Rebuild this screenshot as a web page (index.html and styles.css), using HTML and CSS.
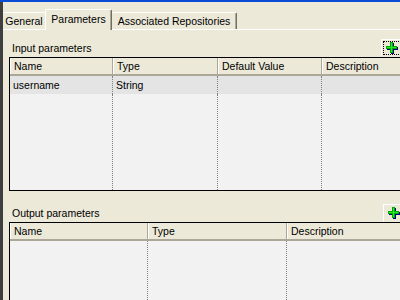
FILE: index.html
```html
<!DOCTYPE html>
<html lang="en">
<head>
    <meta charset="UTF-8">
    <title>Parameters</title>
    <link rel="stylesheet" href="styles.css">
</head>
<body>
    <div class="titlebar"></div>
    <div class="window">
        <div class="edge"></div>
        <div class="main">
            <div class="tabs">
                <div class="tab tab-general">General</div>
                <div class="tab tab-active">Parameters</div>
                <div class="tab tab-repos">Associated Repositories</div>
            </div>

            <div class="panel">
                <div class="section-head">
                    <span class="section-label">Input parameters</span>
                    <button class="add-btn focused" type="button">
                        <svg width="12" height="12" viewBox="0 0 12 12">
                            <path d="M5 1h3v4h4v3H8v4H5V8H1V5h4z" fill="#000080"/>
                            <path d="M4 0h3v4h4v3H7v4H4V7H0V4h4z" fill="#00a800"/>
                            <path d="M5 1h1v4h4v1H6v4H5V6H1V5h4z" fill="#22ee22"/>
                        </svg>
                    </button>
                </div>
                <div class="grid input-grid">
                    <div class="grid-head cols-4">
                        <div class="head-cell">Name</div>
                        <div class="head-cell">Type</div>
                        <div class="head-cell">Default Value</div>
                        <div class="head-cell">Description</div>
                    </div>
                    <div class="grid-body cols-4">
                        <div class="cell row-sel">username</div>
                        <div class="cell row-sel">String</div>
                        <div class="cell row-sel"></div>
                        <div class="cell row-sel"></div>
                        <div class="cell"></div>
                        <div class="cell"></div>
                        <div class="cell"></div>
                        <div class="cell"></div>
                    </div>
                </div>

                <div class="section-head section-out">
                    <span class="section-label">Output parameters</span>
                    <button class="add-btn" type="button">
                        <svg width="12" height="12" viewBox="0 0 12 12">
                            <path d="M5 1h3v4h4v3H8v4H5V8H1V5h4z" fill="#000080"/>
                            <path d="M4 0h3v4h4v3H7v4H4V7H0V4h4z" fill="#00a800"/>
                            <path d="M5 1h1v4h4v1H6v4H5V6H1V5h4z" fill="#22ee22"/>
                        </svg>
                    </button>
                </div>
                <div class="grid output-grid">
                    <div class="grid-head cols-3">
                        <div class="head-cell">Name</div>
                        <div class="head-cell">Type</div>
                        <div class="head-cell">Description</div>
                    </div>
                    <div class="grid-body cols-3">
                        <div class="cell"></div>
                        <div class="cell"></div>
                        <div class="cell"></div>
                    </div>
                </div>
            </div>
        </div>
    </div>
</body>
</html>
```

FILE: styles.css
```css
* {
    margin: 0;
    padding: 0;
    box-sizing: border-box;
}

html, body {
    overflow: hidden;
}

body {
    width: 400px;
    height: 300px;
    background-color: #ece9d8;
    font-family: "Liberation Sans", Arial, sans-serif;
    font-size: 10.5px;
    color: #000;
}

.titlebar {
    height: 2px;
    background-color: #0b4cd6;
}

.window {
    display: flex;
    height: 298px;
}

.edge {
    width: 3px;
    flex-shrink: 0;
    background-color: #3f3f3f;
}

.main {
    flex: 1;
    min-width: 0;
}

/* tab strip */
.tabs {
    display: flex;
    align-items: flex-end;
    padding-top: 7px;
}

.tab {
    height: 17px;
    line-height: 16px;
    text-align: center;
    white-space: nowrap;
    border-top: 1px solid #fff;
    border-left: 1px solid #fff;
    border-right: 1px solid #716f64;
    box-shadow: inset -1px 0 #aca899;
    border-radius: 2px 2px 0 0;
}

.tab-general {
    width: 42px;
    border-left: none;
    border-right: none;
    box-shadow: none;
}

.tab-active {
    width: 67px;
    height: 21px;
    padding-top: 1px;
    margin-bottom: -1px;
    background-color: #ece9d8;
}

.tab-repos {
    width: 125px;
    border-left: none;
}

.panel {
    border-top: 1px solid #fff;
}

/* section header with add button */
.section-head {
    display: flex;
    align-items: flex-end;
    justify-content: space-between;
    margin-top: 9px;
    padding-left: 9px;
    margin-right: -5px;
}

.section-out {
    margin-top: 13px;
    margin-right: -7px;
}

.section-label {
    line-height: 13px;
    margin-bottom: 2px;
}

.add-btn {
    display: flex;
    align-items: center;
    width: 24px;
    height: 18px;
    padding-left: 4px;
    background-color: #ece9d8;
    border: 1px solid;
    border-color: #fff #aca899 #ece9d8 #fff;
}

.add-btn.focused {
    outline: 1px dotted #000;
    outline-offset: -3px;
}

/* list views */
.grid {
    margin-left: 6px;
    border: 1px solid #000;
    border-right: none;
    background-color: #f2f2f2;
    display: flex;
    flex-direction: column;
}

.input-grid {
    height: 134px;
}

.output-grid {
    height: 78px;
    border-bottom: none;
}

.cols-4 {
    display: grid;
    grid-template-columns: 103px 105px 104px 1fr;
}

.cols-3 {
    display: grid;
    grid-template-columns: 138px 139px 1fr;
}

.grid-head {
    background-color: #ece9d8;
    border-bottom: 2px solid #aca899;
}

.head-cell {
    height: 16px;
    line-height: 16px;
    padding-left: 3px;
    border-left: 1px solid #fff;
    border-right: 1px solid #aca899;
    white-space: nowrap;
}

.head-cell:last-child {
    border-right: none;
}

.grid-body {
    flex: 1;
    grid-template-rows: 18px 1fr;
}

.output-grid .grid-body {
    grid-template-rows: 1fr;
}

.cell {
    padding-left: 3px;
    line-height: 18px;
    border-right: 1px dotted #808080;
    white-space: nowrap;
}

.cell:nth-child(4n),
.cols-3 .cell:last-child {
    border-right: none;
}

.cell.row-sel {
    background-color: #e4e4e4;
}
```
